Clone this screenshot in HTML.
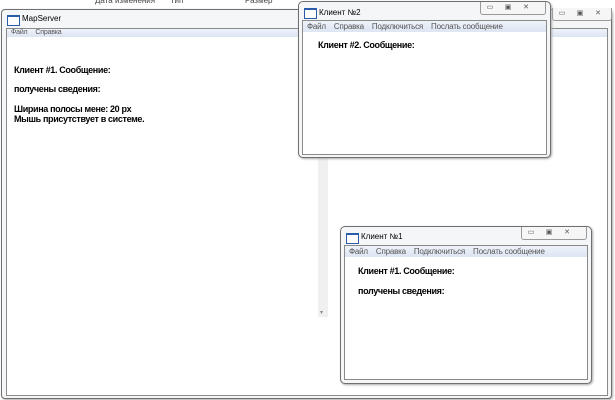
<!DOCTYPE html><html><head><style>
body{margin:0;width:615px;height:400px;background:#fff;position:relative;overflow:hidden;font-family:"Liberation Sans",sans-serif}
.a{position:absolute}
.win{position:absolute;border:1px solid #6f6f6f;border-radius:5px;background:#f4f6f8;box-shadow:1px 1px 2px #aaa}
.cl{position:absolute;background:#fff;border:1px solid #8a8a8a}
.menu{position:absolute;left:0;right:0;top:0;height:11px;background:linear-gradient(#eef2fa,#dde5f3);font-size:8px;color:#555;line-height:11px;white-space:nowrap;letter-spacing:-0.2px}
.menu span{margin-left:4px;margin-right:4px}
.t{font-size:9px;font-weight:bold;color:#000;position:absolute;white-space:nowrap;letter-spacing:-0.35px}
.ic{position:absolute;width:11px;height:8px;border:1px solid #2a5caa;border-top-width:2px;background:#fff}
.btns{position:absolute;height:12px;border:1px solid #999;border-top:none;border-radius:0 0 3px 3px;background:#f6f6f6;font-size:7px;color:#555}
.btns b{display:inline-block;width:18px;text-align:center;font-weight:normal;line-height:12px}
.tt{position:absolute;font-size:8px;color:#000}
</style></head><body>
<div class="a" style="left:95px;top:-4px;font-size:8px;color:#444">Дата изменения</div>
<div class="a" style="left:170px;top:-4px;font-size:8px;color:#444">Тип</div>
<div class="a" style="left:245px;top:-4px;font-size:8px;color:#444">Размер</div>
<!-- main window -->
<div class="win" style="left:1px;top:9px;width:609px;height:388px;border-radius:4px">
 <div class="ic" style="left:5px;top:5px"></div>
 <div class="tt" style="left:20px;top:4px">MapServer</div>
 <div class="cl" style="left:4px;top:18px;width:600px;height:366px">
  <div class="menu" style="height:8px;line-height:8px;font-size:7px"><span>Файл</span><span>Справка</span></div>
  <div class="t" style="left:7px;top:36px">Клиент #1. Сообщение:</div>
  <div class="t" style="left:7px;top:55px">получены сведения:</div>
  <div class="t" style="left:7px;top:75px">Ширина полосы мене: 20 px</div>
  <div class="t" style="left:7px;top:85px">Мышь присутствует в системе.</div>
  <div class="a" style="left:311px;top:0;width:10px;height:288px;background:#f0f0f0"></div>
  <div class="a" style="left:313px;top:280px;font-size:6px;color:#888">▾</div>
 </div>
</div>
<div class="btns" style="left:552px;top:8px;width:58px"><b>▭</b><b>▣</b><b>✕</b></div>
<!-- client 2 -->
<div class="win" style="left:298px;top:1px;width:251px;height:155px">
 <div class="ic" style="left:5px;top:6px"></div>
 <div class="tt" style="left:20px;top:6px">Клиент №2</div>
 <div class="cl" style="left:3px;top:18px;width:243px;height:133px">
  <div class="menu"><span>Файл</span><span>Справка</span><span>Подключиться</span><span>Послать сообщение</span></div>
  <div class="t" style="left:15px;top:19px">Клиент #2. Сообщение:</div>
 </div>
</div>
<div class="btns" style="left:480px;top:2px;width:64px"><b>▭</b><b>▣</b><b>✕</b></div>
<!-- client 1 -->
<div class="win" style="left:340px;top:226px;width:250px;height:156px">
 <div class="ic" style="left:5px;top:6px"></div>
 <div class="tt" style="left:20px;top:5px">Клиент №1</div>
 <div class="cl" style="left:3px;top:18px;width:242px;height:133px">
  <div class="menu"><span>Файл</span><span>Справка</span><span>Подключиться</span><span>Послать сообщение</span></div>
  <div class="t" style="left:13px;top:20px">Клиент #1. Сообщение:</div>
  <div class="t" style="left:13px;top:40px">получены сведения:</div>
 </div>
</div>
<div class="btns" style="left:521px;top:227px;width:64px"><b>▭</b><b>▣</b><b>✕</b></div>
</body></html>
